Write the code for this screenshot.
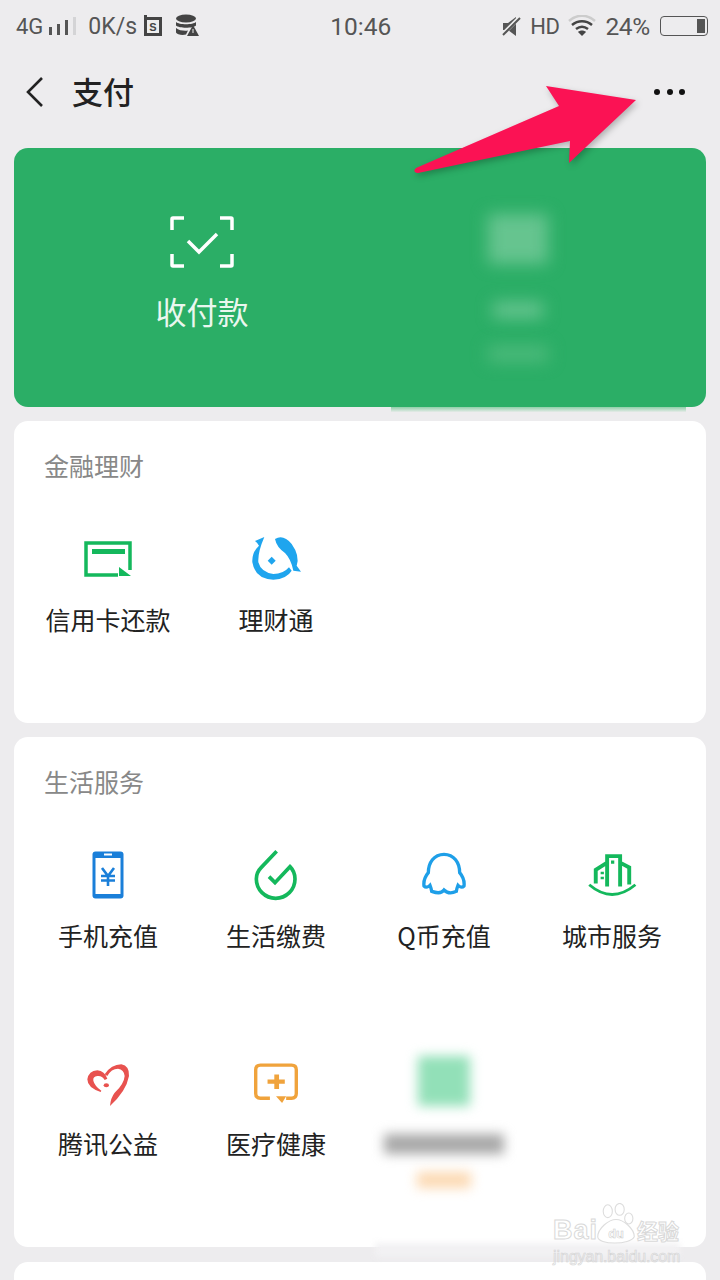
<div class="screen">
	<div class="status">
		<div class="side">
			<span class="net">4G</span>
			<svg class="bars" width="28" height="20" viewBox="0 0 28 20"><path d="M1 11h3v8H1zM9 8h3v11H9zM17 4h3v15h-3z" fill="#555" /><path d="M25 1h3v18h-3z" fill="#d4d4d6" /></svg>
			<span class="speed">0K/s</span>
			<svg class="s-icon" width="20" height="22" viewBox="0 0 20 22"><path d="M1 0h3v2h15v19H1z" fill="#444" /><rect x="4" y="5" width="12" height="13" fill="#eee" /><text x="10" y="16" text-anchor="middle" class="s-letter">S</text></svg>
			<svg class="db-icon" width="24" height="24" viewBox="0 0 24 24"><ellipse cx="11" cy="4.500" rx="10" ry="4" fill="#444" /><path d="M1 8c3 3 17 3 20 0v3.500c-3 3-17 3-20 0zM1 14c3 3 10 3 12 2.500l-2 4c-4 1-9 0-10-2z" fill="#444" /><path d="M18 11l6 11H12z" fill="#444" /><path d="M17.500 15h1v4h-1z" fill="#eee" /></svg>
		</div>
		<span class="clock">10:46</span>
		<div class="side">
			<svg class="mute" width="19" height="21" viewBox="0 0 19 21"><path d="M1 7h5l8-6v19l-8-6H1z" fill="#555" /><path d="M0 19L18 1" stroke="#eee" stroke-width="4" /><path d="M1 19L18 2" stroke="#555" stroke-width="2" /></svg>
			<span class="hd">HD</span>
			<svg class="wifi" width="28" height="22" viewBox="0 0 28 22"><path d="M1 6c8-7 18-7 26 0" fill="none" stroke="#ccc" stroke-width="2.500" /><path d="M4 10c6-5 14-5 20 0M8 14c4-3 8-3 12 0" fill="none" stroke="#444" stroke-width="2.500" /><path d="M14 21l-4-4c2-2 6-2 8 0z" fill="#444" /></svg>
			<span class="pct">24%</span>
			<div class="battery"><span class="level"></span></div>
		</div>
	</div>

	<header class="top">
		<svg width="18" height="32" viewBox="0 0 18 32"><path d="M16 2L2 16l14 14" fill="none" stroke="#222" stroke-width="2.600" /></svg>
		<h1>支付</h1>
		<div class="dots"><i></i><i></i><i></i></div>
	</header>

	<section class="pay">
		<div class="pay-main">
			<svg width="64" height="52" viewBox="0 0 64 52">
				<path d="M2 14V3q0-1 1-1h11M50 2h11q1 0 1 1v11M62 38v11q0 1-1 1H50M14 50H3q-1 0-1-1V38" fill="none" stroke="#fff" stroke-width="3.500" />
				<path d="M18 25l11 11 18-18" fill="none" stroke="#fff" stroke-width="3.500" />
			</svg>
			<span>收付款</span>
		</div>
		<div class="pay-hidden">
			<div class="smear square"></div>
			<div class="smear line"></div>
			<div class="smear line wide"></div>
		</div>
	</section>

	<section class="card">
		<h2>金融理财</h2>
		<div class="grid">
			<div class="cell">
				<div class="icon">
					<svg width="48" height="36" viewBox="0 0 48 36">
						<path d="M34 34H2V2h44v27" fill="none" stroke="#14b85c" stroke-width="3.500" />
						<path d="M8 8h33v5H8z" fill="#14b85c" />
						<path d="M35 26l12 9H35z" fill="#14b85c" />
					</svg>
				</div>
				<span>信用卡还款</span>
			</div>
			<div class="cell">
				<div class="icon">
					<svg width="62" height="60" viewBox="0 0 186 180">
						<path d="M58 24L30 36Q38 42 42 50Q20 70 22 100Q30 150 85 152Q125 150 140 125L132 115Q115 135 85 135Q48 130 40 100Q38 70 58 24z" fill="#1fa5ee" />
						<path d="M90 30Q115 15 140 45Q165 80 155 110L168 128L145 125Q138 90 120 72Q95 55 90 30z" fill="#1fa5ee" />
						<path d="M80 83l12 12l-12 12l-12-12z" fill="#1fa5ee" />
					</svg>
				</div>
				<span>理财通</span>
			</div>
		</div>
	</section>

	<section class="card">
		<h2>生活服务</h2>
		<div class="grid">
			<div class="cell">
				<div class="icon">
					<svg width="32" height="48" viewBox="0 0 32 48">
						<rect x="0.500" y="0.500" width="31" height="47" rx="3" fill="#1a7fd9" />
						<rect x="3.500" y="7" width="25" height="36" fill="#fff" />
						<path d="M12 2.500h8v2h-8z" fill="#fff" />
						<path d="M10 17l6 8l6-8M9 25h14M9 29.500h14M16 24v11" fill="none" stroke="#1a7fd9" stroke-width="2.600" />
					</svg>
				</div>
				<span>手机充值</span>
			</div>
			<div class="cell">
				<div class="icon">
					<svg width="44" height="52" viewBox="552 25 132 156">
						<path d="M597 108l18 18l45-48q15 15 15 37a58 58 0 1 1-116 0q0-20 15-35l46-48" fill="none" stroke="#14b85c" stroke-width="11" />
					</svg>
				</div>
				<span>生活缴费</span>
			</div>
			<div class="cell">
				<div class="icon">
					<svg width="44" height="46" viewBox="66 32 132 138">
						<path d="M132 39c-30 0-47 25-47 55c-10 12-15 25-13 40c6 6 14 2 18-2q4 10 5 18c15 5 28 8 37-4c10 10 25 10 37 4q1-8 5-18c4 4 12 8 18 2c2-15-3-28-13-40c0-30-17-55-47-55z" fill="none" stroke="#1e9fe8" stroke-width="10" />
					</svg>
				</div>
				<span>Q币充值</span>
			</div>
			<div class="cell">
				<div class="icon">
					<svg width="52" height="46" viewBox="555 30 160 140">
						<path d="M620 135V42h40v93M660 62l28 15v52M620 62l-35 22v42" fill="none" stroke="#14b85c" stroke-width="12" />
						<path d="M632 55h10v10h-10zM600 90h10v8h-10zM600 105h10v8h-10z" fill="#14b85c" />
						<path d="M565 130q70 60 142 0" fill="none" stroke="#14b85c" stroke-width="9" />
					</svg>
				</div>
				<span>城市服务</span>
			</div>
			<div class="cell">
				<div class="icon">
					<svg width="60" height="55" viewBox="0 0 180 165">
						<path d="M68 108Q28 95 28 70Q32 45 58 43Q80 45 88 68L80 72Q72 58 58 60Q44 62 46 74Q50 90 70 104z" fill="#e8524f" />
						<path d="M80 55Q100 25 130 25Q155 30 153 60Q145 105 96 150Q98 125 110 110Q138 85 140 60Q138 40 120 38Q100 38 88 60z" fill="#e8524f" />
						<ellipse cx="85" cy="88" rx="8" ry="6" fill="#e8524f" />
					</svg>
				</div>
				<span>腾讯公益</span>
			</div>
			<div class="cell">
				<div class="icon">
					<svg width="46" height="42" viewBox="550 40 136 122">
						<path d="M600 146h-28q-14 0-14-14V62q0-14 14-14h92q14 0 14 14v70q0 14-14 14h-16" fill="none" stroke="#f0a33c" stroke-width="10" />
						<path d="M618 140h30l-12 20z" fill="#f0a33c" />
						<path d="M593 91h20V76h14v15h17v12h-17v16h-14v-16h-20z" fill="#f0a33c" />
					</svg>
				</div>
				<span>医疗健康</span>
			</div>
			<div class="cell hidden-cell">
				<div class="smear mint"></div>
				<div class="smear name"></div>
				<div class="smear tag"></div>
			</div>
		</div>
	</section>

	<section class="card stub"></section>

	<div class="arrow">
		<svg width="240" height="100" viewBox="410 80 240 100">
			<path d="M416 168L559 106L546 86L636 100L569 163L570 141L418 173Q412 172 416 168z" fill="#fb1254" />
		</svg>
	</div>
	<div class="patch-edge"></div>
	<div class="smudge"></div>
	<div class="mark">
		<div class="mark-row">
			<span>Bai</span>
			<svg class="paw" width="42" height="42" viewBox="0 0 44 46">
				<g fill="#fff" stroke="#ddd" stroke-width="1.200">
					<ellipse cx="13" cy="9" rx="5" ry="7" />
					<ellipse cx="26" cy="7" rx="5" ry="6.500" />
					<ellipse cx="36" cy="17" rx="4.500" ry="6" />
					<path d="M22 18c-8 0-20 10-20 19c0 9 36 9 40 0c0-9-12-19-20-19z" />
				</g>
				<text x="22" y="38" text-anchor="middle" class="mark-du">du</text>
			</svg>
			<span class="mark-cn">经验</span>
		</div>
		<div class="mark-url">jingyan.baidu.com</div>
	</div>
</div>

<style>
	:global(body) {
		background: #edecee;
	}

	.screen {
		position: relative;
		height: 1280px;
		overflow: hidden;
		background: #edecee;
		font-family: 'Noto Sans CJK SC', sans-serif;
	}

	.status {
		display: flex;
		justify-content: space-between;
		align-items: center;
		height: 52px;
		padding: 0 12px 0 16px;
		font-family: Roboto, sans-serif;
		color: #555;
	}

	.side {
		display: flex;
		align-items: center;
	}

	.net {
		font-size: 22px;
	}

	.bars {
		margin: 0 0 0 5px;
	}

	.speed {
		margin-left: 12px;
		font-size: 23px;
	}

	.s-icon {
		margin-left: 6px;
	}

	.s-letter {
		font: bold 11px 'Liberation Sans', sans-serif;
		fill: #444;
	}

	.db-icon {
		margin-left: 12px;
	}

	.clock {
		margin-left: 20px;
		font-size: 24.500px;
	}

	.hd {
		margin-left: 9px;
		font-size: 22px;
		letter-spacing: -0.5px;
	}

	.wifi {
		margin-left: 9px;
	}

	.pct {
		margin-left: 9px;
		font-size: 24.500px;
		letter-spacing: -0.3px;
	}

	.battery {
		display: flex;
		justify-content: flex-end;
		align-items: center;
		box-sizing: border-box;
		width: 48px;
		height: 20px;
		margin-left: 10px;
		padding: 1px 2px;
		border: 1px solid #555;
		border-radius: 4px;
	}

	.level {
		width: 8px;
		height: 14px;
		background: #555;
	}

	.top {
		display: flex;
		align-items: center;
		height: 80px;
		margin-bottom: 16px;
		padding: 0 35px 0 26px;
	}

	.top h1 {
		flex: 1;
		margin: -4px 0 0 28px;
		font-size: 31px;
		font-weight: 500;
		color: #222;
	}

	.dots {
		display: flex;
		gap: 6.500px;
	}

	.dots i {
		width: 6px;
		height: 6px;
		border-radius: 50%;
		background: #111;
	}

	.pay {
		display: flex;
		height: 259px;
		margin: 0 14px 14px;
		border-radius: 14px;
		background: #2bae66;
		color: #fff;
	}

	.pay-main {
		display: flex;
		flex-direction: column;
		align-items: center;
		width: 376px;
		padding-top: 68px;
		box-sizing: border-box;
	}

	.pay-main span {
		margin-top: 21px;
		font-size: 31px;
		line-height: 44px;
		color: #eaf7ef;
	}

	.pay-hidden {
		display: flex;
		flex-direction: column;
		align-items: center;
		width: 256px;
		padding-top: 66px;
	}

	.smear {
		filter: blur(6px);
	}

	.square {
		width: 60px;
		height: 50px;
		background: #66c48f;
		filter: blur(8px);
	}

	.line {
		width: 50px;
		height: 16px;
		margin-top: 38px;
		background: #66c48f;
		filter: blur(8px);
	}

	.line.wide {
		width: 60px;
		margin-top: 28px;
		background: #4cba7b;
	}

	.card {
		margin: 0 14px 14px;
		padding-top: 94px;
		position: relative;
		border-radius: 14px;
		background: #fff;
	}

	.card h2 {
		position: absolute;
		top: 27px;
		left: 30px;
		margin: 0;
		font-size: 25px;
		font-weight: 400;
		line-height: 34px;
		color: #888;
	}

	.grid {
		display: grid;
		grid-template-columns: repeat(4, 168px);
		padding: 0 10px;
	}

	.cell {
		display: flex;
		flex-direction: column;
		align-items: center;
		height: 208px;
		font-size: 25px;
		font-weight: 400;
		color: #222;
	}

	.icon {
		display: flex;
		justify-content: center;
		align-items: center;
		height: 60px;
		margin-top: 14px;
	}

	.cell span {
		margin-top: 15px;
		line-height: 30px;
		white-space: nowrap;
	}

	.mint {
		width: 52px;
		height: 50px;
		margin-top: 17px;
		background: #92e0b8;
	}

	.name {
		width: 120px;
		height: 20px;
		margin-top: 28px;
		background: #a8a8a8;
	}

	.tag {
		width: 54px;
		height: 16px;
		margin-top: 18px;
		background: #fcd9b2;
	}

	.stub {
		height: 60px;
		margin-top: 15px;
		padding: 0;
	}

	.arrow {
		position: absolute;
		top: 80px;
		left: 410px;
		filter: drop-shadow(2px 3px 3px rgba(0, 0, 0, 0.25));
	}

	.patch-edge {
		position: absolute;
		top: 407px;
		left: 391px;
		width: 295px;
		height: 5px;
		background: linear-gradient(#8fcfa9, #e6ebe8);
	}

	.smudge {
		position: absolute;
		top: 1243px;
		left: 375px;
		width: 305px;
		height: 14px;
		background: #f2f1f3;
		filter: blur(3px);
	}

	.mark {
		position: absolute;
		top: 1201px;
		left: 553px;
		width: 130px;
		font-family: 'Liberation Sans', sans-serif;
		color: #fff;
		-webkit-text-stroke: 1px #d9d9d9;
	}

	.mark-row {
		display: flex;
		align-items: flex-end;
		height: 44px;
	}

	.mark-row span {
		font-size: 27px;
		font-weight: 700;
		line-height: 30px;
		letter-spacing: 1px;
	}

	.paw {
		margin-left: -3px;
	}

	.mark-row .mark-cn {
		margin-left: 0;
		font-family: 'Noto Sans CJK SC', sans-serif;
		font-size: 21px;
		letter-spacing: 0;
	}

	.mark-du {
		font: bold 14px 'Liberation Sans', sans-serif;
		fill: #fff;
		stroke: #ccc;
		stroke-width: 0.6;
	}

	.mark-url {
		margin-top: 3px;
		font-size: 16px;
		letter-spacing: -0.1px;
		line-height: 18px;
		color: transparent;
		-webkit-text-stroke: 0.6px #d4d4d4;
		white-space: nowrap;
	}
</style>
